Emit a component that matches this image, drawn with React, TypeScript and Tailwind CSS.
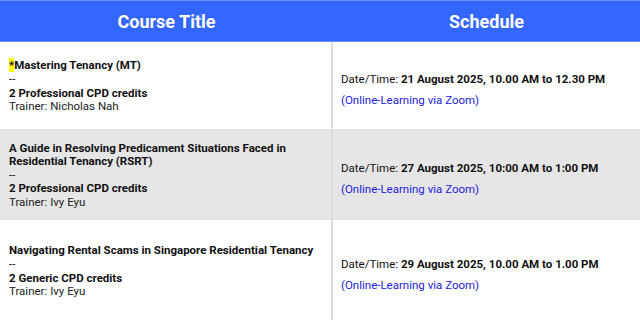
const courses = [
  {
    title: "Mastering Tenancy (MT)",
    star: true,
    credits: "2 Professional CPD credits",
    trainer: "Nicholas Nah",
    date: "21 August 2025, 10.00 AM to 12.30 PM",
    h: "h-[88px]",
    bg: "bg-white",
  },
  {
    title: "A Guide in Resolving Predicament Situations Faced in Residential Tenancy (RSRT)",
    star: false,
    credits: "2 Professional CPD credits",
    trainer: "Ivy Eyu",
    date: "27 August 2025, 10:00 AM to 1:00 PM",
    h: "h-[90px]",
    bg: "bg-[#e6e6e6]",
  },
  {
    title: "Navigating Rental Scams in Singapore Residential Tenancy",
    star: false,
    credits: "2 Generic CPD credits",
    trainer: "Ivy Eyu",
    date: "29 August 2025, 10.00 AM to 1.00 PM",
    h: "h-[102px]",
    bg: "bg-white",
  },
];

export default function App() {
  return (
    <div className="w-[640px] h-[320px] overflow-hidden bg-white font-['Roboto',sans-serif] text-[#111]">
      {/* Header */}
      <div className="grid grid-cols-[333px_1fr] h-[42px] bg-[#3366ff] border-t border-b border-[#6a8dff] text-white text-[18px] font-bold">
        <div className="flex items-center justify-center">Course Title</div>
        <div className="flex items-center justify-center">Schedule</div>
      </div>

      {courses.map((c, i) => (
        <div
          key={i}
          className={`grid grid-cols-[333px_1fr] ${c.h} ${c.bg} border-b border-[#e2e2e2]`}
        >
          <div className="flex items-center pl-[9px] pr-2 pt-[2px] border-r-2 border-[#dddddd] text-[11.5px] leading-[13.6px]">
            <div>
              <div className="font-bold">
                {c.star && <span className="bg-[#ffff00]">*</span>}
                {c.title}
              </div>
              <div>--</div>
              <div className="font-bold">{c.credits}</div>
              <div className="text-[#222]">Trainer: {c.trainer}</div>
            </div>
          </div>
          <div className="flex items-center pl-[8px] pt-[8px] text-[11.5px] leading-[14px]">
            <div>
              <div>
                Date/Time: <span className="font-bold">{c.date}</span>
              </div>
              <div className="mt-[7px] text-[#2222dd]">(Online-Learning via Zoom)</div>
            </div>
          </div>
        </div>
      ))}
    </div>
  );
}
